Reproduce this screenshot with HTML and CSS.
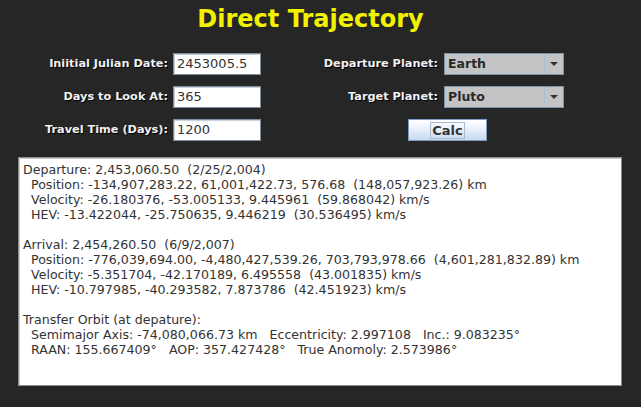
FILE: index.html
```html
<!DOCTYPE html>
<html lang="en">
<head>
  <meta charset="UTF-8" />
  <title>Direct Trajectory</title>
  <link rel="stylesheet" href="styles.css">
</head>
<body>

<div class="title">Direct Trajectory</div>

<!-- Inputs -->
<div class="form">
  <label class="lbl">Iniitial Julian Date:</label>
  <div class="field">2453005.5</div>
  <label class="lbl lbl-right">Departure Planet:</label>
  <div class="combo"><span class="combo-text">Earth</span><span class="combo-arrow"></span></div>

  <label class="lbl">Days to Look At:</label>
  <div class="field">365</div>
  <label class="lbl lbl-right">Target Planet:</label>
  <div class="combo"><span class="combo-text">Pluto</span><span class="combo-arrow"></span></div>

  <label class="lbl">Travel Time (Days):</label>
  <div class="field">1200</div>
  <div class="btn-cell"><button class="calc"><span class="focus">Calc</span></button></div>
</div>

<!-- Results -->
<div class="output">Departure: 2,453,060.50  (2/25/2,004)
  Position: -134,907,283.22, 61,001,422.73, 576.68  (148,057,923.26) km
  Velocity: -26.180376, -53.005133, 9.445961  (59.868042) km/s
  HEV: -13.422044, -25.750635, 9.446219  (30.536495) km/s

Arrival: 2,454,260.50  (6/9/2,007)
  Position: -776,039,694.00, -4,480,427,539.26, 703,793,978.66  (4,601,281,832.89) km
  Velocity: -5.351704, -42.170189, 6.495558  (43.001835) km/s
  HEV: -10.797985, -40.293582, 7.873786  (42.451923) km/s

Transfer Orbit (at depature):
  Semimajor Axis: -74,080,066.73 km   Eccentricity: 2.997108   Inc.: 9.083235°
  RAAN: 155.667409°   AOP: 357.427428°   True Anomoly: 2.573986°</div>

</body>
</html>
```

FILE: styles.css
```css
* { margin: 0; padding: 0; box-sizing: border-box; }
body {
  font-family: 'DejaVu Sans', sans-serif;
  background: #262626;
  width: 641px;
  height: 407px;
  overflow: hidden;
}

.title {
  color: #f2f200;
  font-size: 24px;
  font-weight: bold;
  text-align: center;
  height: 53px;
  padding: 5px 20px 0 0;
}

.form {
  display: grid;
  grid-template-columns: 173px 88px 183px 120px;
  grid-auto-rows: 22px;
  row-gap: 11px;
}

.lbl {
  color: #f0f0f0;
  font-size: 11.3px;
  font-weight: bold;
  text-align: right;
  padding-right: 5px;
  line-height: 22px;
  text-shadow: 1px 1px 0 #000;
}
.lbl-right { padding-right: 6px; }

.field {
  background: #fff;
  border: 1px solid #7f8e9d;
  box-shadow: inset 1px 1px 0 #c9d2db;
  color: #333;
  font-size: 13px;
  line-height: 20px;
  padding-left: 3px;
}

.combo {
  display: flex;
  background: #c4c4c4;
  border: 1px solid #7d93aa;
  color: #2a2a2a;
}
.combo-text {
  flex: 1;
  font-size: 12.5px;
  font-weight: bold;
  line-height: 20px;
  padding-left: 3px;
  border-right: 1px solid #a9bfd6;
}
.combo-arrow {
  width: 18px;
  position: relative;
}
.combo-arrow::after {
  content: "";
  position: absolute;
  left: 5px;
  top: 8px;
  border-left: 4px solid transparent;
  border-right: 4px solid transparent;
  border-top: 4px solid #333;
}

.btn-cell {
  grid-column: 3 / 5;
  padding-left: 147px;
}
.calc {
  width: 79px;
  height: 22px;
  border: 1px solid #7d9dc2;
  background: linear-gradient(#ffffff, #e9f1f9 45%, #c6daed);
  font-family: 'DejaVu Sans', sans-serif;
  font-size: 13px;
  font-weight: bold;
  color: #333;
}
.focus {
  border: 1px solid #a8bcd2;
  padding: 0 1px;
}

.output {
  margin: 16px 0 0 18px;
  width: 604px;
  height: 229px;
  background: #fff;
  border: 1px solid #8c8c8c;
  box-shadow: inset 1px 1px 0 #cfcfcf;
  color: #333;
  font-size: 12.6px;
  line-height: 15px;
  padding: 4px 4px;
  white-space: pre;
}
```
